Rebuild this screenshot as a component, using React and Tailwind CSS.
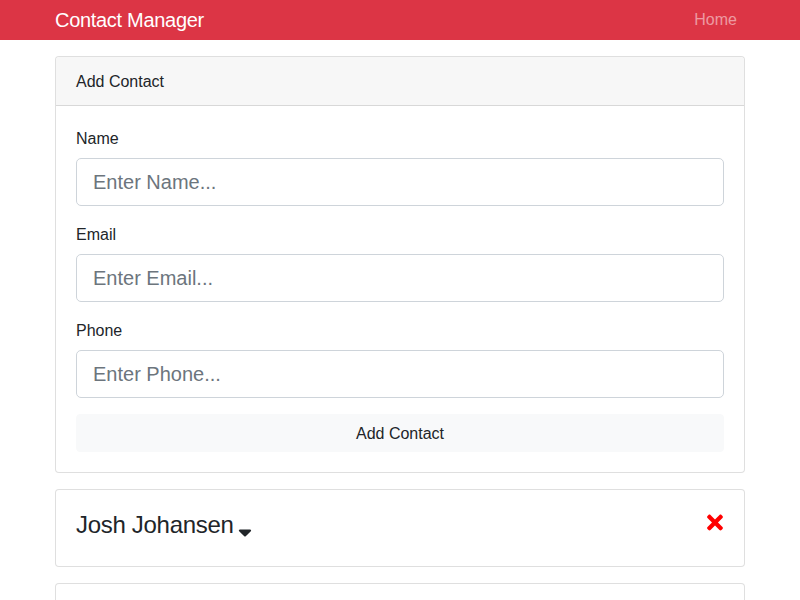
import React from "react";

function Field({ label, placeholder }) {
  return (
    <div className="mb-4">
      <label className="block pt-px mb-[7px] text-base leading-6 text-[#212529]">{label}</label>
      <input
        type="text"
        placeholder={placeholder}
        className="block w-full h-12 px-4 pt-px text-xl border border-[#ced4da] rounded-[5px] bg-white text-[#495057] placeholder:text-[#6c757d] outline-none"
      />
    </div>
  );
}

function Contact({ name }) {
  return (
    <div className="mb-4 border border-[rgba(0,0,0,0.125)] rounded-[4px] bg-white">
      <div className="px-5 pt-[21px] pb-5">
        <h4 className="flex items-start text-2xl leading-7 mb-[7px] tracking-[-0.3px] text-[#212529]">
          {name}
          <svg viewBox="0 0 320 512" className="w-[14px] h-[22px] ml-1 mt-[6px] fill-[#212529]">
            <path d="M41 288h238c21.4 0 32.1 25.9 17 41L177 448c-9.4 9.4-24.6 9.4-33.9 0L24 329c-15.1-15.1-4.4-41 17-41z" />
          </svg>
          <svg viewBox="0 0 352 512" className="ml-auto w-[18px] h-[23px] fill-[#ff0000]">
            <path d="M242.72 256l100.07-100.07c12.28-12.28 12.28-32.19 0-44.48l-22.24-22.24c-12.28-12.28-32.19-12.28-44.48 0L176 189.28 75.93 89.21c-12.28-12.28-32.19-12.28-44.48 0L9.21 111.45c-12.28 12.28-12.28 32.19 0 44.48L109.28 256 9.21 356.07c-12.28 12.28-12.28 32.19 0 44.48l22.24 22.24c12.28 12.28 32.2 12.28 44.48 0L176 322.72l100.07 100.07c12.28 12.28 32.2 12.28 44.48 0l22.24-22.24c12.28-12.28 12.28-32.19 0-44.48L242.72 256z" />
          </svg>
        </h4>
      </div>
    </div>
  );
}

export default function App() {
  return (
    <div className="min-h-screen bg-white font-['Liberation_Sans',Arial,sans-serif] text-[#212529]">
      {/* 상단 바 */}
      <nav className="h-10 bg-[#dc3545]">
        <div className="w-[720px] mx-auto px-[15px] h-full flex items-center justify-between">
          <a className="text-xl text-white tracking-[-0.3px]">Contact Manager</a>
          <a className="text-base text-white/50 pr-2">Home</a>
        </div>
      </nav>

      <div className="w-[720px] mx-auto px-[15px] pt-4">
        {/* 추가 폼 */}
        <div className="mb-4 border border-[rgba(0,0,0,0.125)] rounded-[4px] bg-white">
          <div className="px-5 pt-[13px] pb-[11px] leading-6 bg-[#f7f7f7] border-b border-[rgba(0,0,0,0.125)] rounded-t-[4px]">
            Add Contact
          </div>
          <div className="p-5">
            <Field label="Name" placeholder="Enter Name..." />
            <Field label="Email" placeholder="Enter Email..." />
            <Field label="Phone" placeholder="Enter Phone..." />
            <button className="block w-full h-[38px] pt-px bg-[#f8f9fa] border border-[#f8f9fa] rounded-[4px] text-base text-[#212529]">
              Add Contact
            </button>
          </div>
        </div>

        <Contact name="Josh Johansen" />
        <Contact name="Karen Williams" />
      </div>
    </div>
  );
}
